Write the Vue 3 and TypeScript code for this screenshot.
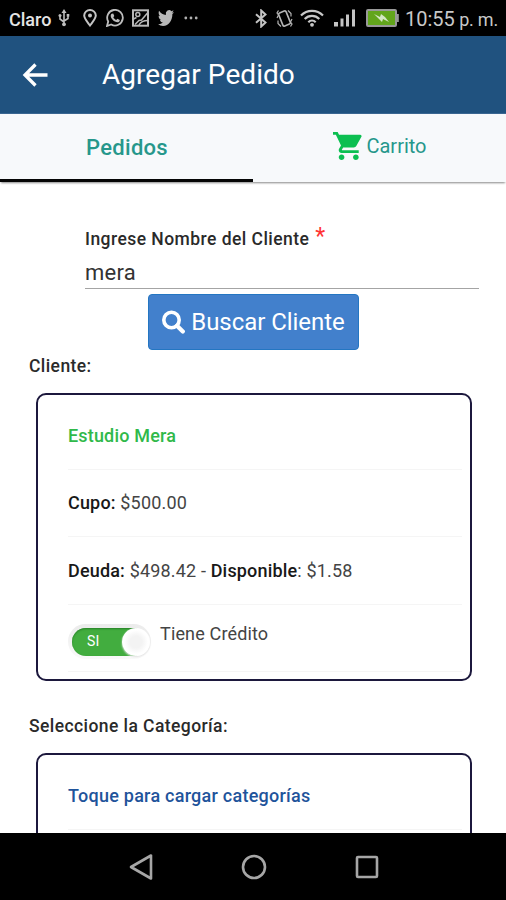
<script setup lang="ts">
import { ref } from 'vue'

interface Cliente {
  nombre: string
  cupo: string
  deuda: string
  disponible: string
}

const busqueda = ref('mera')
const tieneCredito = ref(true)
const cliente: Cliente = {
  nombre: 'Estudio Mera',
  cupo: '$500.00',
  deuda: '$498.42',
  disponible: '$1.58',
}
</script>

<template>
  <div class="screen">
    <div class="status">
      <span class="carrier">Claro</span>
      <svg class="usb" width="12" height="18" viewBox="0 0 12 18" fill="none" stroke="#bdbdbd" stroke-width="1.6">
        <path d="M6 15V2M6 13L2 10V6.500M6 12l4-2.500V6" />
        <path d="M3.500 4L6 0l2.500 4z" fill="#bdbdbd" stroke="none" />
        <circle cx="6" cy="15.300" r="1.900" fill="#bdbdbd" stroke="none" />
        <circle cx="2" cy="6.500" r="1.500" fill="#bdbdbd" stroke="none" />
        <rect x="8.700" y="5" width="2.600" height="2.600" fill="#bdbdbd" stroke="none" />
      </svg>
      <svg class="pin" width="14" height="18" viewBox="0 0 14 18" fill="none" stroke="#c4c4c4" stroke-width="2">
        <path d="M7 16.500C4 12.500 1.200 9.500 1.200 6.500a5.800 5.500 0 0 1 11.600 0C12.800 9.500 10 12.500 7 16.500z" />
        <circle cx="7" cy="6.600" r="2" fill="#c4c4c4" stroke="none" />
      </svg>
      <svg class="whatsapp" width="18" height="18" viewBox="0 0 18 18" fill="none" stroke="#bdbdbd" stroke-width="1.800">
        <path d="M1 17l1.200-4.500a7.800 7.800 0 1 1 3 3z" />
        <path d="M5.700 4.700l1.500-.3 1.100 2.600-1 1.200c.7 1.300 1.600 2.100 2.900 2.700l1.200-1.100 2.400 1.200c0 1.500-1.100 2.300-2.300 2.300-3.300-.3-6.700-3.600-6.800-6.600 0-.9.400-1.600 1-2z" fill="#bdbdbd" stroke="none" />
      </svg>
      <svg class="picture" width="17" height="18" viewBox="0 0 17 18" fill="none" stroke="#b8b8b8" stroke-width="2">
        <rect x="1" y="1.300" width="15" height="15.400" />
        <circle cx="5.800" cy="5.500" r="2" stroke-width="1.500" />
        <path d="M1.500 10l3-1.500M3 15.500l4-4 2.500-.5 6-7M7 16c2-4 5-4.500 9-4.500" stroke-width="1.500" />
      </svg>
      <svg class="twitter" width="16" height="18" viewBox="0 1 24 22" fill="#b8b8b8" preserveAspectRatio="none">
        <path d="M23.950 4.570a10 10 0 0 1-2.820.77 4.960 4.960 0 0 0 2.160-2.720c-.95.550-2 .950-3.130 1.190a4.920 4.920 0 0 0-8.380 4.480C7.690 8.090 4.070 6.130 1.640 3.160a4.820 4.820 0 0 0-.67 2.480c0 1.710.87 3.210 2.190 4.100a4.900 4.900 0 0 1-2.230-.62v.06a4.920 4.920 0 0 0 3.950 4.830 5 5 0 0 1-2.210.08 4.940 4.940 0 0 0 4.600 3.420A9.870 9.870 0 0 1 0 19.540a14 14 0 0 0 7.550 2.210c9.050 0 14-7.500 14-13.980 0-.21 0-.42-.02-.63a9.940 9.940 0 0 0 2.420-2.570z" />
      </svg>
      <svg class="dots" width="14" height="4" viewBox="0 0 14 4" fill="#b0b0b0">
        <circle cx="1.800" cy="2" r="1.400" /><circle cx="7" cy="2" r="1.400" /><circle cx="12.200" cy="2" r="1.400" />
      </svg>
      <span class="gap"></span>
      <svg class="bluetooth" width="14" height="19" viewBox="0 0 14 19" fill="none" stroke="#c4c4c4" stroke-width="2">
        <path d="M2 5.200l9.500 8.300-4.300 4V1.500l4.300 4L2 13.800" />
      </svg>
      <svg class="mute" width="17" height="19" viewBox="0 0 17 19" fill="none" stroke="#b4b4b4" stroke-width="1.600">
        <rect x="4.500" y="2.500" width="8" height="14" rx="1.500" transform="rotate(-22 8.500 9.500)" />
        <path d="M2.500 1.500L1 4l1.500 2L1 9M14.500 17.500L16 15l-1.500-2L16 10M12 1.500l3 3v3M5 17.500l-3-3v-3" stroke-width="1.200" />
      </svg>
      <svg class="wifi" width="24" height="18" viewBox="0 0 24 18" fill="none" stroke="#c8c8c8" stroke-width="2.200">
        <path d="M1 6.500a15.500 15.500 0 0 1 22 0M4.700 10a10.300 10.300 0 0 1 14.600 0M8.300 13.200a5.300 5.300 0 0 1 7.400 0" />
        <circle cx="12" cy="15.800" r="1.900" fill="#c8c8c8" stroke="none" />
      </svg>
      <svg class="signal" width="22" height="18" viewBox="0 0 22 18" fill="#c4c4c4">
        <rect x="0" y="13" width="4" height="4.500" /><rect x="6.500" y="9.500" width="3" height="8" /><rect x="12" y="5.500" width="3" height="12" /><rect x="18" y="0.500" width="3" height="17" />
      </svg>
      <svg class="battery" width="33" height="18" viewBox="0 0 33 18">
        <rect x="1" y="1" width="29" height="16" rx="1" fill="#62a51b" stroke="#999" stroke-width="2" />
        <rect x="30.500" y="5" width="2.300" height="8" fill="#999" />
        <path d="M8 5l6 3 1-3 4 3 4 5-6-3-1 3z" fill="#d5e6c5" />
      </svg>
      <span class="time">10:55<span class="meridiem">p. m.</span></span>
    </div>

    <header class="header">
      <svg width="26" height="24" viewBox="0 0 26 24" fill="none" stroke="#fff" stroke-width="3.300">
        <path d="M25.500 12H3M13.500 1.500L3 12l10.500 10.500" />
      </svg>
      <h1>Agregar Pedido</h1>
    </header>

    <nav class="tabs">
      <a class="tab active"><span>Pedidos</span></a>
      <a class="tab cart">
        <svg width="29" height="28" viewBox="1 2 20.300 20" preserveAspectRatio="none" fill="#0cbf51">
          <path d="M7 18c-1.100 0-1.990.9-1.990 2S5.900 22 7 22s2-.9 2-2-.9-2-2-2zM1 2v2h2l3.600 7.590-1.350 2.450c-.16.280-.25.610-.25.960 0 1.100.9 2 2 2h12v-2H7.420c-.14 0-.25-.11-.25-.25l.03-.12.900-1.630h7.450c.750 0 1.410-.41 1.750-1.030l3.580-6.490A1 1 0 0 0 20 4H5.210l-.94-2H1zm16 16c-1.100 0-1.990.9-1.990 2s.89 2 1.990 2 2-.9 2-2-.9-2-2-2z" />
        </svg>
        <span>Carrito</span>
      </a>
    </nav>

    <main class="content">
      <form class="search" @submit.prevent>
        <label for="cliente">Ingrese Nombre del Cliente <span class="required">*</span></label>
        <input id="cliente" v-model="busqueda" type="text" />
        <button type="submit">
          <svg width="23" height="24" viewBox="0 0 23 24" fill="none" stroke="#fff">
            <circle cx="9.500" cy="10" r="7.700" stroke-width="3.600" />
            <path d="M15 15.700l5.800 5.800" stroke-width="4.200" stroke-linecap="round" />
          </svg>
          <span>Buscar Cliente</span>
        </button>
      </form>

      <h2 class="client-title">Cliente:</h2>
      <section class="card">
        <div class="row name">{{ cliente.nombre }}</div>
        <div class="row cupo"><span><b>Cupo:</b> {{ cliente.cupo }}</span></div>
        <div class="row deuda"><span><b>Deuda:</b> {{ cliente.deuda }} - <b>Disponible</b>: {{ cliente.disponible }}</span></div>
        <div class="row credit">
          <div class="toggle" :class="{ on: tieneCredito }" @click="tieneCredito = !tieneCredito">
            <div class="track"><span>{{ tieneCredito ? 'SI' : 'NO' }}</span></div>
            <div class="knob"></div>
          </div>
          <span class="credit-label">Tiene Crédito</span>
        </div>
      </section>

      <h2 class="category-title">Seleccione la Categoría:</h2>
      <section class="card categories">
        <div class="row load">Toque para cargar categorías</div>
      </section>
    </main>

    <footer class="navbar">
      <svg width="24" height="28" viewBox="0 0 24 28" fill="none" stroke="#a6a6a6" stroke-width="2.600"><path d="M22 2.500v23L2 14z" stroke-linejoin="round" /></svg>
      <svg width="26" height="26" viewBox="0 0 26 26" fill="none" stroke="#a6a6a6" stroke-width="2.600"><circle cx="13" cy="13" r="11" /></svg>
      <svg width="24" height="24" viewBox="0 0 24 24" fill="none" stroke="#a6a6a6" stroke-width="2.600"><rect x="2" y="2" width="20" height="20" rx="1" /></svg>
    </footer>
  </div>
</template>

<style>
body { margin: 0; background: #fff; }
</style>

<style scoped>
* { box-sizing: border-box; }
.screen {
  width: 506px;
  height: 900px;
  display: flex;
  flex-direction: column;
  overflow: hidden;
  background: #fff;
  color: #2a2a2a;
  font-family: Roboto, "Liberation Sans", sans-serif;
}
svg { display: block; flex: none; }
.status {
  height: 36px;
  flex: none;
  display: flex;
  align-items: center;
  padding: 0 8px 0 9px;
  background: #000;
  color: #c8c8c8;
  white-space: nowrap;
}
.carrier { width: 49px; font-size: 18px; font-weight: 500; color: #e4e4e4; padding-top: 2px; }
.pin { margin-left: 13px; }
.whatsapp { margin-left: 9px; }
.picture { margin-left: 8px; }
.twitter { margin-left: 9px; }
.dots { margin-left: 10px; }
.gap { flex: 1; }
.mute { margin-left: 8px; }
.wifi { margin-left: 7px; }
.signal { margin-left: 10px; }
.battery { margin-left: 10px; }
.time { display: flex; align-items: baseline; justify-content: space-between; width: 93px; margin-left: 6px; font-size: 20px; padding-top: 2px; }
.meridiem { font-size: 18px; letter-spacing: -0.200px; }
.header {
  height: 78px;
  flex: none;
  display: flex;
  align-items: center;
  padding: 0 0 0 22px;
  background: #20527f;
  border-bottom: 1px solid #3a6691;
}
.header h1 { margin: 0 0 0 54px; font-size: 28px; font-weight: 400; letter-spacing: 0.050px; color: #fff; }
.tabs {
  position: relative;
  height: 68px;
  flex: none;
  display: flex;
  background: #f7f9fb;
  box-shadow: 0 2px 2px -1px #888;
}
.tab {
  width: 50%;
  flex: none;
  display: flex;
  align-items: center;
  justify-content: center;
  color: #26978b;
}
.active { border-bottom: 3px solid #050505; padding: 1px 0 0 1px; font-size: 22px; font-weight: 500; letter-spacing: 0.300px; }
.cart { font-size: 20px; gap: 4px; padding: 0 0 5px 1px; }
.content { flex: 1; min-height: 0; overflow: hidden; }
.search { display: flex; flex-direction: column; padding: 42px 27px 0 85px; }
.search label { height: 32px; font-size: 17.500px; font-weight: 500; line-height: 30px; letter-spacing: 0.450px; white-space: nowrap; }
.required { position: relative; left: 1px; top: -1px; color: #f33; font-size: 23px; font-weight: 400; line-height: 20px; }
.search input {
  height: 33px;
  border: 0;
  border-bottom: 1px solid #a4a4a4;
  border-radius: 0;
  padding: 1px 0 0;
  background: none;
  color: #333;
  font: 400 22px Roboto, sans-serif;
  letter-spacing: 0.250px;
  outline: none;
}
.search button {
  width: 211px;
  height: 56px;
  margin: 5px 0 1px 63px;
  display: flex;
  align-items: center;
  justify-content: center;
  gap: 6px;
  padding: 0 0 1px;
  border: 1px solid #2476c2;
  border-radius: 4px;
  background: #4280cc;
  color: #fff;
  font: 400 24px Roboto, sans-serif;
  letter-spacing: -0.050px;
  white-space: nowrap;
}
h2 { margin: 0 0 0 29px; font-size: 17.500px; font-weight: 500; line-height: 24px; letter-spacing: 0.420px; }
.client-title { padding-top: 3px; }
.card {
  height: 288px;
  width: 436px;
  margin: 15px 0 0 36px;
  padding: 7px 8px 0 30px;
  border: 2px solid #1c183d;
  border-radius: 10px;
}
.row {
  height: 67.500px;
  display: flex;
  align-items: center;
  border-bottom: 1px solid #f5f5f5;
  font-size: 18px;
  letter-spacing: 0.170px;
  white-space: nowrap;
  color: #444;
}
.row b { font-weight: 500; color: #181818; }
.name { font-weight: 500; color: #30b94a; }
.credit { align-items: flex-start; padding-top: 12px; letter-spacing: 0.150px; }
.toggle {
  position: relative;
  width: 83px;
  height: 35px;
  margin-top: 7px;
  padding: 4px;
  border-radius: 18px;
  background: linear-gradient(#ebebeb, #fafafa);
}
.track { height: 28px; width: 65px; border-radius: 14px 0 0 14px; background: #42ad3f; box-shadow: inset 0 1px 2px #278226; }
.track span { display: block; padding-left: 15px; font-size: 14px; line-height: 26px; color: #fff; }
.toggle:not(.on) .track { background: #ccc; box-shadow: none; }
.knob { position: absolute; right: 1px; top: 4px; width: 28px; height: 28px; border-radius: 50%; background: radial-gradient(#f3f3f3 30%, #fff 60%); box-shadow: 0 1px 2px #e2e2e2; }
.toggle:not(.on) .knob { right: 51px; }
.credit-label { margin-left: 9px; padding-top: 6px; }
.category-title { padding-top: 33px; }
.categories { height: 120px; }
.load { font-weight: 500; letter-spacing: 0.250px; color: #1f549b; }
.navbar {
  height: 67px;
  flex: none;
  display: flex;
  align-items: center;
  padding-left: 129px;
  gap: 88px;
  background: #000;
}
</style>
